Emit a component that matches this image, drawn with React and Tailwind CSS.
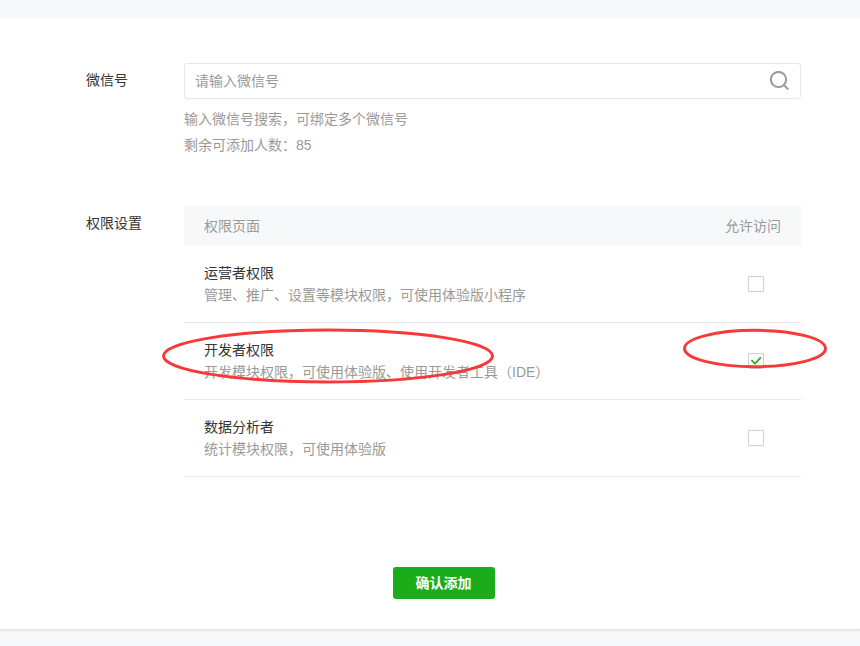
import { useState } from 'react';

const ROLES = [
  {
    id: 'operator',
    name: '运营者权限',
    desc: '管理、推广、设置等模块权限，可使用体验版小程序',
  },
  {
    id: 'developer',
    name: '开发者权限',
    desc: '开发模块权限，可使用体验版、使用开发者工具（IDE）',
    marked: true,
  },
  {
    id: 'analyst',
    name: '数据分析者',
    desc: '统计模块权限，可使用体验版',
  },
];

const SearchIcon = () => (
  <svg width="20" height="20" viewBox="0 0 20 20" fill="none" stroke="#999999" strokeWidth="2" aria-hidden="true">
    <circle cx="8.5" cy="8.5" r="7.6" />
    <path d="M13.6 13.6 L18.4 18.6" />
  </svg>
);

const Checkbox = ({ id, checked, onChange }) => (
  <span className="relative block h-4 w-4">
    <input
      id={id}
      type="checkbox"
      checked={checked}
      onChange={onChange}
      className="block h-4 w-4 appearance-none rounded-[1px] border border-[#cfcfcf] bg-white"
    />
    {checked && (
      <svg className="pointer-events-none absolute inset-0" width="16" height="16" viewBox="0 0 16 16" fill="none" stroke="#1aad19" strokeWidth="1.6" aria-hidden="true">
        <path d="M3.4 7.2 L7 10.6 L12.8 4.4" />
      </svg>
    )}
  </span>
);

// Red hand-drawn style rings around the role to pick
const RoleRing = () => (
  <svg className="pointer-events-none absolute -left-[22px] top-[5px] max-w-none" width="332" height="56" viewBox="0 0 332 56" fill="none" stroke="#f93838" strokeWidth="3" aria-hidden="true">
    <ellipse cx="166" cy="28" rx="164.5" ry="26" />
  </svg>
);

const AccessRing = () => (
  <svg className="pointer-events-none absolute -right-[26px] top-[5px] max-w-none" width="144" height="42" viewBox="0 0 144 42" fill="none" stroke="#f93838" strokeWidth="3" aria-hidden="true">
    <ellipse cx="72" cy="20.5" rx="70.5" ry="18.2" />
  </svg>
);

const App = () => {
  const [account, setAccount] = useState('');
  const [allowed, setAllowed] = useState({ developer: true });

  const toggle = (id) => setAllowed((prev) => ({ ...prev, [id]: !prev[id] }));

  return (
    <div lang="zh-CN" className="min-h-screen bg-[#f6f8f9] pt-[18px] font-['Liberation_Sans','Noto_Sans_CJK_SC',sans-serif] text-sm text-[#353535]">
      <main className="border-b border-[#e0e1e2] bg-white pb-[30px] pl-[86px] pr-[59px] pt-[45px] shadow-[0_1px_2px_rgba(0,0,0,0.08)]">
        <form onSubmit={(e) => e.preventDefault()}>
          {/* Account */}
          <div className="flex">
            <label htmlFor="account" className="w-[98px] shrink-0 pt-1.5 leading-[22px]">微信号</label>
            <div className="min-w-0 flex-1">
              <div className="flex h-9 items-center rounded-[3px] border border-[#e4e6eb] pl-2.5 pr-2.5">
                <input
                  id="account"
                  type="text"
                  value={account}
                  onChange={(e) => setAccount(e.target.value)}
                  placeholder="请输入微信号"
                  className="min-w-0 flex-1 leading-[22px] outline-none placeholder:text-[#9a9a9a]"
                />
                <button type="submit" aria-label="搜索">
                  <SearchIcon />
                </button>
              </div>
              <p className="mt-[7px] leading-[26px] text-[#9a9a9a]">
                输入微信号搜索，可绑定多个微信号
                <br />
                剩余可添加人数：85
              </p>
            </div>
          </div>

          {/* Permissions */}
          <div className="mt-12 flex">
            <div className="w-[98px] shrink-0 pt-1.5 leading-[22px]">权限设置</div>
            <table className="min-w-0 flex-1 border-collapse text-left">
              <thead>
                <tr className="h-10 bg-[#f6f8f9] text-[#9a9a9a]">
                  <th className="pl-5 font-normal">权限页面</th>
                  <th className="w-28 pr-5 text-right font-normal">允许访问</th>
                </tr>
              </thead>
              <tbody>
                {ROLES.map((role) => (
                  <tr key={role.id} className="border-b border-[#e7e7eb]">
                    <td className="relative py-4 pl-5">
                      <label htmlFor={role.id} className="block leading-[22px]">
                        {role.name}
                        <span className="block text-[#9a9a9a]">{role.desc}</span>
                      </label>
                      {role.marked && <RoleRing />}
                    </td>
                    <td className="relative pr-[37px]">
                      <div className="flex justify-end">
                        <Checkbox id={role.id} checked={!!allowed[role.id]} onChange={() => toggle(role.id)} />
                      </div>
                      {role.marked && <AccessRing />}
                    </td>
                  </tr>
                ))}
              </tbody>
            </table>
          </div>

          <div className="mt-[90px] flex justify-center">
            <button type="submit" className="h-8 w-[102px] rounded-[3px] bg-[#1aad19] font-bold text-white">
              确认添加
            </button>
          </div>
        </form>
      </main>
    </div>
  );
};

export default App;
